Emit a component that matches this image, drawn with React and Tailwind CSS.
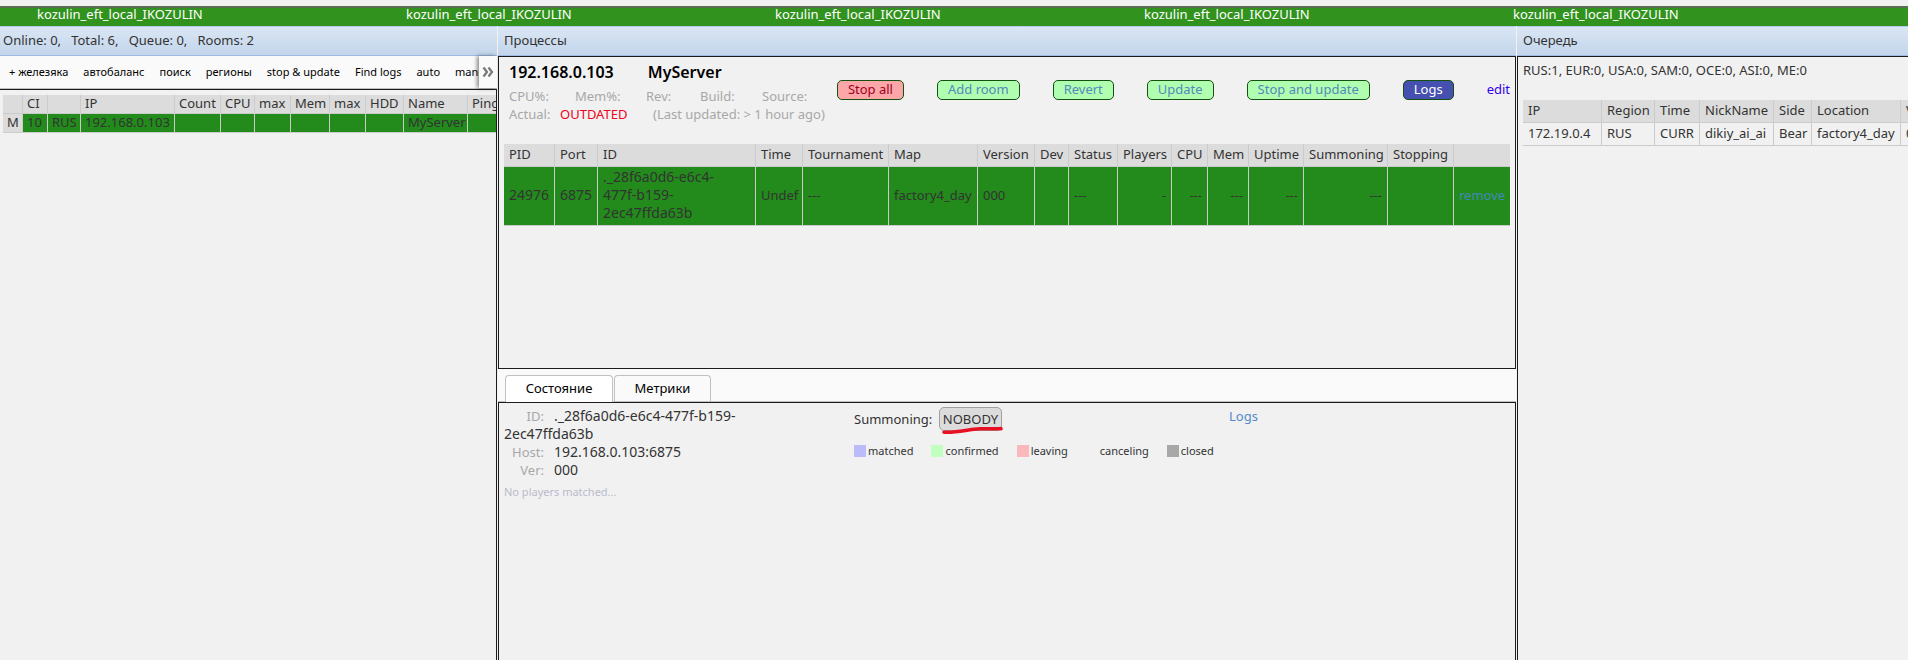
import React from "react";

const BANNER = "kozulin_eft_local_IKOZULIN";

const MENU = [
  "+ железяка",
  "автобаланс",
  "поиск",
  "регионы",
  "stop & update",
  "Find logs",
  "auto",
  "manual",
];

const SERVER_COLS = [
  ["", "w-[20px]", "M"],
  ["CI", "w-[25px]", "10"],
  ["", "w-[33px]", "RUS"],
  ["IP", "w-[94px]", "192.168.0.103"],
  ["Count", "w-[46px]", ""],
  ["CPU", "w-[34px]", ""],
  ["max", "w-[36px]", ""],
  ["Mem", "w-[39px]", ""],
  ["max", "w-[36px]", ""],
  ["HDD", "w-[38px]", ""],
  ["Name", "w-[64px]", "MyServer"],
  ["Ping", "w-[40px]", ""],
];

const PROCESS_COLS = [
  ["PID", "w-[51px]", "24976", "text-left text-sm"],
  ["Port", "w-[43px]", "6875", "text-left text-sm"],
  ["ID", "w-[158px]", "._28f6a0d6-e6c4-\n477f-b159-\n2ec47ffda63b", "text-left text-sm"],
  ["Time", "w-[47px]", "Undef", "text-left"],
  ["Tournament", "w-[86px]", "---", "text-left"],
  ["Map", "w-[89px]", "factory4_day", "text-left"],
  ["Version", "w-[57px]", "000", "text-left"],
  ["Dev", "w-[34px]", "", "text-left"],
  ["Status", "w-[49px]", "---", "text-left"],
  ["Players", "w-[54px]", "-", "text-right"],
  ["CPU", "w-[36px]", "---", "text-right"],
  ["Mem", "w-[41px]", "---", "text-right"],
  ["Uptime", "w-[55px]", "---", "text-right"],
  ["Summoning", "w-[84px]", "---", "text-right"],
  ["Stopping", "w-[66px]", "", "text-left"],
];

const QUEUE_COLS = [
  ["IP", "w-[79px]", "172.19.0.4"],
  ["Region", "w-[53px]", "RUS"],
  ["Time", "w-[45px]", "CURR"],
  ["NickName", "w-[74px]", "dikiy_ai_ai"],
  ["Side", "w-[38px]", "Bear"],
  ["Location", "w-[89px]", "factory4_day"],
  ["Version", "w-[60px]", "000"],
];

const LEGEND = [
  ["matched", "bg-[#bbbbfb]"],
  ["confirmed", "bg-[#c0ffc0]"],
  ["leaving", "bg-[#fbb8bb]"],
  ["canceling", "bg-transparent"],
  ["closed", "bg-[#a8a8a8]"],
];

const ROOM_FIELDS = [
  ["ID:", "._28f6a0d6-e6c4-477f-b159-\n2ec47ffda63b"],
  ["Host:", "192.168.0.103:6875"],
  ["Ver:", "000"],
];

function PaneHeader({ children }) {
  return (
    <h2 className="flex h-[30px] items-center whitespace-pre border-y border-t-[#b5cbec] border-b-[#9fbbe4] bg-linear-to-b from-[#dae6f3] to-[#c3d5ec] pb-[2px]">
      {children}
    </h2>
  );
}

function Action({ children, tone }) {
  return (
    <button type="button" className={"h-5 rounded-[5px] border border-[#14500f] px-[10px] leading-4 pb-[2px] " + tone}>
      {children}
    </button>
  );
}

function Banner() {
  return (
    <div className="mt-[6px] flex h-5 overflow-hidden border-t-2 border-[#5a6e55] bg-[#31921e] text-white">
      {[0, 1, 2, 3, 4].map((i) => (
        <span key={i} className="w-[369px] shrink-0 pl-[37px] leading-3">
          {BANNER}
        </span>
      ))}
    </div>
  );
}

function Servers() {
  return (
    <section className="flex min-w-0 flex-col">
      <PaneHeader>
        <span className="pl-[3px]">Online: 0,   Total: 6,   Queue: 0,   Rooms: 2</span>
      </PaneHeader>
      <nav className="flex h-[33px] border-b border-[#c0c0c0] bg-[#fafafa] text-[11px] text-black">
        <div className="flex min-w-0 flex-1 items-center gap-[15px] overflow-hidden whitespace-nowrap pl-[9px]">
          {MENU.map((m) => (
            <button key={m} type="button" className="shrink-0">
              {m}
            </button>
          ))}
        </div>
        <button
          type="button"
          aria-label="More"
          className="flex w-[18px] items-center justify-center bg-[#fafafa] shadow-[-2px_0_4px_rgba(0,0,0,0.45)]"
        >
          <svg width="12" height="12" viewBox="0 0 12 12" fill="none" stroke="#777" strokeWidth="2.2">
            <path d="M1.5 1.5 L5 6 L1.5 10.5 M6.5 1.5 L10 6 L6.5 10.5" />
          </svg>
        </button>
      </nav>
      <div className="flex-1 overflow-hidden border-t border-r border-[#1c1c1c] pt-[5px] pl-[3px]">
        <table className="w-[505px] table-fixed border-separate border-spacing-0">
          <thead>
            <tr className="h-[19px] bg-[#dcdcdc]">
              {SERVER_COLS.map(([h, w], i) => (
                <th key={i} className={"border-r border-b border-[#cbcbcb] pb-[2px] pl-1 text-left font-normal leading-4 " + w}>
                  {h}
                </th>
              ))}
            </tr>
          </thead>
          <tbody>
            <tr className="h-[19px] bg-[#228b1b]">
              {SERVER_COLS.map(([, , v], i) => (
                <td
                  key={i}
                  className={"border-r border-b border-[#cbcbcb] pb-[2px] pl-1 leading-4 " + (i === 0 ? "bg-[#dcdcdc]" : "")}
                >
                  {v}
                </td>
              ))}
            </tr>
          </tbody>
        </table>
      </div>
    </section>
  );
}

function ServerSummary() {
  return (
    <div className="flex justify-between pl-1">
      <div className="pl-px">
        <h1 className="flex gap-[34px] text-base font-semibold leading-[30px] text-black">
          <span>192.168.0.103</span>
          <span>MyServer</span>
        </h1>
        <div className="flex leading-[18px] text-[#a8a8a8]">
          <span className="w-[66px]">CPU%:</span>
          <span className="w-[71px]">Mem%:</span>
          <span className="w-[54px]">Rev:</span>
          <span className="w-[62px]">Build:</span>
          <span>Source:</span>
        </div>
        <div className="flex leading-[18px] text-[#a8a8a8]">
          <span className="w-[51px]">Actual:</span>
          <span className="w-[93px] text-[#f00020]">OUTDATED</span>
          <span>(Last updated: &gt; 1 hour ago)</span>
        </div>
      </div>
      <div className="mt-[23px] flex h-5 items-center gap-[33px]">
        <Action tone="bg-[#fba6a8] text-[#a00020]">Stop all</Action>
        <Action tone="bg-[#b0ffb0] text-[#5588bb]">Add room</Action>
        <Action tone="bg-[#b0ffb0] text-[#5588bb]">Revert</Action>
        <Action tone="bg-[#b0ffb0] text-[#5588bb]">Update</Action>
        <Action tone="bg-[#b0ffb0] text-[#5588bb]">Stop and update</Action>
        <Action tone="bg-[#4650b0] text-white">Logs</Action>
        <a href="#edit" className="pb-[2px] leading-4 text-[#3300ee]">
          edit
        </a>
      </div>
    </div>
  );
}

function Processes() {
  return (
    <section className="flex min-w-0 flex-col">
      <PaneHeader>
        <span className="pl-[6px]">Процессы</span>
      </PaneHeader>
      <div className="h-[313px] overflow-hidden border border-[#1c1c1c] px-[5px]">
        <ServerSummary />
        <table className="mt-[21px] w-full table-fixed border-separate border-spacing-0">
          <thead>
            <tr className="h-[23px] bg-[#dcdcdc]">
              {PROCESS_COLS.map(([h, w]) => (
                <th key={h} className={"border-r border-b border-[#cbcbcb] pb-[2px] pl-[5px] text-left font-normal " + w}>
                  {h}
                </th>
              ))}
              <th className="border-b border-[#cbcbcb]"></th>
            </tr>
          </thead>
          <tbody>
            <tr className="h-[59px] bg-[#228b1b]">
              {PROCESS_COLS.map(([h, , v, look]) => (
                <td
                  key={h}
                  className={"whitespace-pre-line border-r border-b border-[#cbcbcb] px-[5px] pb-[2px] leading-[18px]! " + look}
                >
                  {v}
                </td>
              ))}
              <td className="border-b border-[#cbcbcb] pb-[2px] pl-[5px]">
                <a href="#remove" className="text-[#4488bb]">
                  remove
                </a>
              </td>
            </tr>
          </tbody>
        </table>
      </div>
      <div role="tablist" className="flex h-[33px] items-end gap-px border-b border-[#c0c0c0] bg-[#fafafa] pl-[7px] text-black">
        <button
          role="tab"
          aria-selected="true"
          type="button"
          className="-mb-px h-[27px] w-[108px] rounded-t border border-b-0 border-[#c0c0c0] bg-white pb-[3px]"
        >
          Состояние
        </button>
        <button
          role="tab"
          aria-selected="false"
          type="button"
          className="h-[26px] w-[97px] rounded-t border border-b-0 border-[#c0c0c0] pb-[2px]"
        >
          Метрики
        </button>
      </div>
      <div className="flex flex-1 border border-b-0 border-[#1c1c1c] px-[5px]">
        <div className="w-[350px] pt-1">
          {ROOM_FIELDS.map(([label, value]) => (
            <p key={label} className="whitespace-pre-line text-sm/[18px]">
              <span className="mr-[10px] inline-block w-10 text-right text-[13px] text-[#a8a8a8]">{label}</span>
              {value}
            </p>
          ))}
          <p className="mt-1 text-[11px] text-[#bbbbcc]">No players matched...</p>
        </div>
        <div className="w-[375px] pt-1">
          <div className="flex items-center">
            <span className="w-[85px]">Summoning:</span>
            <button type="button" className="relative h-6 w-[63px] rounded-[5px] border border-[#a0a0a0] bg-[#dcdcdc]">
              NOBODY
              <svg className="absolute top-[18px] left-[2px]" width="62" height="9" viewBox="0 0 62 9" fill="none">
                <path d="M2 6.2 C16 7 26 3.2 38 2.8 C47 2.4 53 3.2 59 2.6" stroke="#e81123" strokeWidth="3.6" strokeLinecap="round" />
              </svg>
            </button>
          </div>
          <ul className="mt-[14px] flex gap-[18px] text-[11px] leading-3">
            {LEGEND.map(([label, color]) => (
              <li key={label} className="flex items-center gap-[2px]">
                <span className={"size-3 " + color}></span>
                {label}
              </li>
            ))}
          </ul>
        </div>
        <a href="#logs" className="pt-1 leading-[18px] text-[#5588cc]">
          Logs
        </a>
      </div>
    </section>
  );
}

function Queue() {
  return (
    <section className="flex min-w-0 flex-col">
      <PaneHeader>
        <span className="pl-[6px]">Очередь</span>
      </PaneHeader>
      <div className="flex-1 overflow-hidden border-t border-l border-[#1c1c1c] pl-[5px]">
        <p className="pt-[3px] leading-[20px]">RUS:1, EUR:0, USA:0, SAM:0, OCE:0, ASI:0, ME:0</p>
        <table className="mt-5 w-[438px] table-fixed border-separate border-spacing-0">
          <thead>
            <tr className="h-[23px] bg-[#dcdcdc]">
              {QUEUE_COLS.map(([h, w]) => (
                <th key={h} className={"border-r border-b border-[#cbcbcb] pb-[2px] pl-[5px] text-left font-normal " + w}>
                  {h}
                </th>
              ))}
            </tr>
          </thead>
          <tbody>
            <tr className="h-[23px]">
              {QUEUE_COLS.map(([h, , v]) => (
                <td key={h} className="border-r border-b border-[#cbcbcb] pb-[2px] pl-[5px]">
                  {v}
                </td>
              ))}
            </tr>
          </tbody>
        </table>
      </div>
    </section>
  );
}

export default function App() {
  return (
    <div className="flex min-h-screen flex-col overflow-hidden bg-[#f1f1f1] font-['Noto_Sans','Open_Sans',sans-serif] text-[13px] leading-[18px] text-[#333]">
      <Banner />
      <main className="grid flex-1 grid-cols-[497px_minmax(0,1fr)_391px] gap-x-px">
        <Servers />
        <Processes />
        <Queue />
      </main>
    </div>
  );
}
